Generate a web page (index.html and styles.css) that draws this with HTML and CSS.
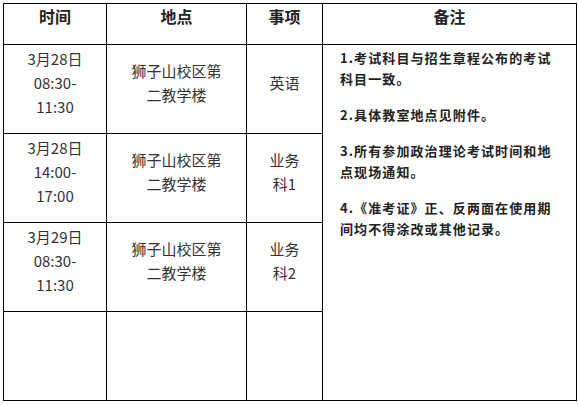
FILE: index.html
```html
<!DOCTYPE html>
<html lang="zh-CN">
<head>
<meta charset="utf-8">
<link rel="stylesheet" href="styles.css">
</head>
<body>
<table class="sched">
  <colgroup>
    <col class="c-time"><col class="c-place"><col class="c-item"><col class="c-note">
  </colgroup>
  <thead>
    <tr class="head">
      <th>时间</th><th>地点</th><th>事项</th><th>备注</th>
    </tr>
  </thead>
  <tbody>
    <tr class="row">
      <td class="cell">3月28日<br>08:30-<br>11:30</td>
      <td class="cell">狮子山校区第<br>二教学楼</td>
      <td class="cell">英语</td>
      <td class="note" rowspan="4">
        <p>1.考试科目与招生章程公布的考试<br>科目一致。</p>
        <p>2.具体教室地点见附件。</p>
        <p>3.所有参加政治理论考试时间和地<br>点现场通知。</p>
        <p>4.《准考证》正、反两面在使用期<br>间均不得涂改或其他记录。</p>
      </td>
    </tr>
    <tr class="row">
      <td class="cell">3月28日<br>14:00-<br>17:00</td>
      <td class="cell">狮子山校区第<br>二教学楼</td>
      <td class="cell">业务<br>科1</td>
    </tr>
    <tr class="row">
      <td class="cell">3月29日<br>08:30-<br>11:30</td>
      <td class="cell">狮子山校区第<br>二教学楼</td>
      <td class="cell">业务<br>科2</td>
    </tr>
    <tr class="row last">
      <td class="cell"></td>
      <td class="cell"></td>
      <td class="cell"></td>
    </tr>
  </tbody>
</table>
</body>
</html>
```
FILE: styles.css
```css
html, body {
  margin: 0;
  padding: 0;
  background: #fff;
}
body {
  padding: 3px 0 0 3px;
  font-family: "Noto Sans CJK SC", sans-serif;
}
.sched {
  border-collapse: collapse;
  table-layout: fixed;
  width: 573px;
}
.c-time { width: 103px; }
.c-place { width: 140px; }
.c-item { width: 76px; }
.c-note { width: 254px; }
.sched th, .sched td {
  border: 1px solid #000;
  padding: 0;
}
.head th {
  height: 41px;
  box-sizing: border-box;
  vertical-align: top;
  padding-top: 0;
  font-size: 16px;
  line-height: 24px;
  font-weight: bold;
  color: #222;
  text-align: center;
}
.row .cell {
  height: 89px;
  box-sizing: border-box;
  vertical-align: middle;
  text-align: center;
  font-size: 15px;
  line-height: 24px;
  color: #333;
  padding-bottom: 13px;
}
.row.last .cell {
  height: 89px;
}
.note {
  vertical-align: top;
  padding: 2px 0 0 17px !important;
  font-size: 13px;
  line-height: 21px;
  font-weight: bold;
  color: #222;
  letter-spacing: 1.1px;
}
.note p {
  margin: 0 0 15px 0;
}
```
